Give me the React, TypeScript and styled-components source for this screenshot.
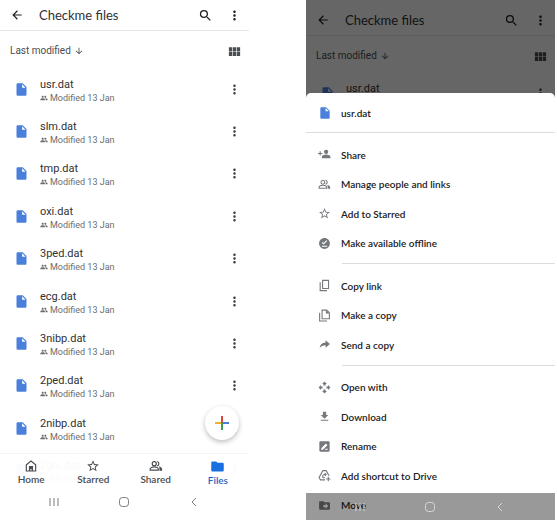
import React from "react";
import styled, { createGlobalStyle } from "styled-components";
import {
  MdArrowBack,
  MdArrowDownward,
  MdDriveFileMove,
  MdFileDownload,
  MdFolder,
  MdInsertDriveFile,
  MdMoreVert,
  MdOfflinePin,
  MdPeople,
  MdSearch,
  MdStarBorder,
  MdViewModule,
} from "react-icons/md";

const GlobalStyle = createGlobalStyle`
  *, *::before, *::after { box-sizing: border-box; }
  body { margin: 0; background: #fff; color: #3c4043; font-family: Roboto, "Liberation Sans", sans-serif; }
  button { border: 0; padding: 0; margin: 0; background: none; color: inherit; font: inherit; cursor: pointer; }
  ul { list-style: none; margin: 0; padding: 0; }
  h1, h2, p { margin: 0; font-weight: 400; }
  svg { display: block; flex: none; }
`;

const brandFont = `Lato, "Liberation Sans", sans-serif`;

const Page = styled.main`
  display: grid;
  grid-template-columns: minmax(0, 1fr) minmax(0, 1fr);
  column-gap: 57px;
  min-height: 100vh;
  padding-right: 2px;
`;

const Phone = styled.section`
  position: relative;
  display: flex;
  flex-direction: column;
  min-width: 0;
`;

const Screen = styled.div`
  position: relative;
  display: flex;
  flex: 1;
  flex-direction: column;
`;

const AppBar = styled.header`
  display: flex;
  align-items: center;
  height: 31px;
  padding: 0 7px 0 10px;
  border-bottom: 1px solid #e6e6e6;
  color: #202124;
`;

const Title = styled.h1`
  flex: 1;
  margin-left: 15px;
  font-family: ${brandFont};
  font-size: 13px;
  line-height: 16px;
  color: #303134;
`;

const IconButton = styled.button<{ $gap?: number }>`
  display: flex;
  align-items: center;
  justify-content: center;
  margin-left: ${(p) => p.$gap ?? 0}px;
`;

const SortBar = styled.div`
  display: flex;
  align-items: center;
  justify-content: space-between;
  height: 40px;
  padding: 0 7px 0 10px;
  color: #4a4d51;
`;

const SortButton = styled.button`
  display: flex;
  align-items: center;
  gap: 3px;
  font-size: 10px;
  line-height: 12px;
`;

const FileList = styled.ul`
  display: grid;
  flex: 1;
  grid-auto-rows: minmax(40px, 1fr);
  margin-top: -3px;
`;

const FileRow = styled.li`
  display: flex;
  align-items: center;
  padding: 0 7px 0 14px;
`;

const FileText = styled.div`
  flex: 1;
  margin-left: 11px;
  padding-top: 3px;
`;

const FileName = styled.p`
  font-size: 11px;
  line-height: 14px;
  color: #303134;
`;

const FileMeta = styled.p`
  display: flex;
  align-items: center;
  gap: 2px;
  font-size: 9px;
  line-height: 12px;
  color: #6a6d71;
`;

const BottomNav = styled.nav`
  position: absolute;
  inset: auto 0 0 0;
  display: grid;
  grid-template-columns: repeat(4, 1fr);
  height: 39px;
  border-top: 1px solid #f4f4f4;
  background: rgba(255, 255, 255, 0.97);
`;

const NavButton = styled.button<{ $active?: boolean }>`
  display: flex;
  flex-direction: column;
  align-items: center;
  padding-top: 5px;
  font-family: ${brandFont};
  font-size: 10px;
  line-height: 12px;
  font-weight: 600;
  color: ${(p) => (p.$active ? "#1a67c9" : "#4a4d51")};
`;

const Fab = styled.button`
  position: absolute;
  right: 10px;
  bottom: 52px;
  display: flex;
  align-items: center;
  justify-content: center;
  width: 34px;
  height: 34px;
  border-radius: 50%;
  background: #fff;
  box-shadow: 0 2px 5px rgba(0, 0, 0, 0.26);
`;

const SystemBar = styled.div<{ $overlay?: boolean }>`
  display: grid;
  grid-template-columns: repeat(3, 70px);
  justify-content: center;
  align-items: center;
  justify-items: center;
  height: ${(p) => (p.$overlay ? 27 : 20)}px;
  margin-bottom: ${(p) => (p.$overlay ? 0 : 8)}px;
  padding-right: 2px;
  color: ${(p) => (p.$overlay ? "#d6d6d6" : "#7a7a7a")};
  ${(p) =>
    p.$overlay &&
    `
    position: absolute;
    inset: auto 0 0 0;
    background: rgba(0, 0, 0, 0.4);
  `}
`;

const Backdrop = styled.div`
  position: relative;
  height: 98px;
  padding-top: 5px;
  overflow: hidden;
`;

const Scrim = styled.div`
  position: absolute;
  inset: 0;
  background: rgba(0, 0, 0, 0.6);
`;

const Sheet = styled.div`
  position: relative;
  display: flex;
  flex: 1;
  flex-direction: column;
  margin-top: -5px;
  border-radius: 5px 5px 0 0;
  background: #fff;
  color: #202124;
  font-family: ${brandFont};
`;

const SheetTitle = styled.h2`
  display: flex;
  align-items: center;
  gap: 9px;
  height: 40px;
  padding-left: 12px;
  border-bottom: 1px solid #dcdcdc;
  font-size: 10px;
  line-height: 14px;
  font-weight: 600;
`;

const MenuGroup = styled.ul<{ $count: number; $last: boolean }>`
  display: flex;
  flex-direction: column;
  flex: ${(p) => p.$count} 0 auto;
  padding: 7px 0 ${(p) => (p.$last ? 0 : 5)}px;
`;

const MenuItem = styled.li`
  display: flex;
  flex: 1 0 29px;
`;

const MenuButton = styled.button`
  display: flex;
  flex: 1;
  align-items: center;
  gap: 10px;
  padding-left: 12px;
  font-size: 10px;
  line-height: 14px;
  font-weight: 600;
  text-align: left;

  svg { color: #75787c; }
`;

const Divider = styled.hr`
  align-self: stretch;
  height: 1px;
  margin: 0 0 0 36px;
  border: 0;
  background: #dcdcdc;
`;

const line = { fill: "none", stroke: "currentColor", strokeWidth: 2 } as const;

const HomeIcon = () => (
  <svg width="14" height="14" viewBox="0 0 24 24">
    <path d="M4 20.500V10l8-6.500 8 6.500v10.500z" {...line} />
    <path d="M8.500 20.500V12h7v8.500h-2.500V17h-2v3.500z" fill="currentColor" />
  </svg>
);

const PeopleIcon = ({ size = 14 }: { size?: number }) => (
  <svg width={size} height={size} viewBox="0 0 24 24">
    <circle cx="9" cy="8" r="3.500" {...line} />
    <path d="M2 19v-1.500c0-2.500 4-4 7-4s7 1.500 7 4V19z" {...line} />
    <path d="M14 4.300a3.800 3.800 0 0 1 0 7.400" {...line} />
    <path d="M17 13c3 .5 5.500 2 5.500 4.500V20H18v-2.500c0-2-.5-3.300-1-4.500z" fill="currentColor" />
  </svg>
);

const ShareIcon = () => (
  <svg width="13" height="13" viewBox="0 0 24 24" fill="currentColor">
    <circle cx="15" cy="7" r="4" />
    <path d="M7 19v-2.500c0-3 5-4.500 8-4.500s8 1.500 8 4.500V19zM3 6h2v3h3v2H5v3H3v-3H0V9h3z" />
  </svg>
);

const CopyLinkIcon = () => (
  <svg width="13" height="13" viewBox="0 0 24 24">
    <path d="M8.500 2.500h11v15h-11zM4 6v15.500h12.500" {...line} />
  </svg>
);

const MakeCopyIcon = () => (
  <svg width="13" height="13" viewBox="0 0 24 24">
    <path d="M7.500 2h8.500l5 5v11H7.500zM3 7v15h13.500" {...line} />
    <path d="M14.500 2v6.500H21z" fill="currentColor" />
  </svg>
);

const SendIcon = () => (
  <svg width="13" height="13" viewBox="0 0 24 24" fill="currentColor">
    <path d="M14 4l8 7-8 7v-4.500C9 13.500 5.500 15 3 19c.6-6 4-10 11-10.500z" />
  </svg>
);

const OpenWithIcon = () => (
  <svg width="13" height="13" viewBox="0 0 24 24" fill="currentColor">
    <path d="M12 1l4.500 4.500H14v3h-4v-3H7.500zM12 23l-4.500-4.500H10v-3h4v3h2.500zM1 12l4.500-4.500V10h3v4h-3v2.500zM23 12l-4.500 4.500V14h-3v-4h3V7.500z" />
  </svg>
);

const RenameIcon = () => (
  <svg width="13" height="13" viewBox="0 0 24 24">
    <rect x="2.500" y="2.500" width="19" height="19" rx="2" fill="currentColor" />
    <path d="M6 18v-3l8.500-8.500 3 3L9 18zM12 18l2-2h4v2z" fill="#fff" />
  </svg>
);

const ShortcutIcon = () => (
  <svg width="13" height="13" viewBox="0 0 24 24">
    <path d="M13 20H4.500L2 15.500 9 3h6l5.500 9.500" {...line} />
    <path d="M13 16H9.500c-2-2-.5-6 2-6H15M12.500 7.500L15 10l-2.500 2.500M19 14.500v8M15 18.500h8" {...line} />
  </svg>
);

const PlusIcon = () => (
  <svg width="16" height="16" viewBox="0 0 16 16">
    <path d="M7 1h2v6H7z" fill="#d9483b" />
    <path d="M1 7h6v2H1z" fill="#eeb22f" />
    <path d="M9 7h6v2H9z" fill="#4a7fdc" />
    <path d="M7 7h2v8H7z" fill="#3c9a55" />
    <path d="M7 7h2L7 9z" fill="#d9483b" />
  </svg>
);

const FileIcon = ({ size = 15 }: { size?: number }) => <MdInsertDriveFile size={size} color="#4a80dc" />;

const files = ["usr.dat", "slm.dat", "tmp.dat", "oxi.dat", "3ped.dat", "ecg.dat", "3nibp.dat", "2ped.dat", "2nibp.dat", "2glu.dat"];

const navItems = [
  { label: "Home", icon: <HomeIcon /> },
  { label: "Starred", icon: <MdStarBorder size={14} /> },
  { label: "Shared", icon: <PeopleIcon /> },
  { label: "Files", icon: <MdFolder size={15} color="#1a6fe0" />, active: true },
];

const menuGroups = [
  [
    { label: "Share", icon: <ShareIcon /> },
    { label: "Manage people and links", icon: <PeopleIcon size={13} /> },
    { label: "Add to Starred", icon: <MdStarBorder size={13} /> },
    { label: "Make available offline", icon: <MdOfflinePin size={13} /> },
  ],
  [
    { label: "Copy link", icon: <CopyLinkIcon /> },
    { label: "Make a copy", icon: <MakeCopyIcon /> },
    { label: "Send a copy", icon: <SendIcon /> },
  ],
  [
    { label: "Open with", icon: <OpenWithIcon /> },
    { label: "Download", icon: <MdFileDownload size={13} /> },
    { label: "Rename", icon: <RenameIcon /> },
    { label: "Add shortcut to Drive", icon: <ShortcutIcon /> },
    { label: "Move", icon: <MdDriveFileMove size={13} /> },
  ],
];

const FolderHeader = () => (
  <>
    <AppBar>
      <IconButton aria-label="Back"><MdArrowBack size={14} /></IconButton>
      <Title>Checkme files</Title>
      <IconButton aria-label="Search"><MdSearch size={15} /></IconButton>
      <IconButton aria-label="More options" $gap={14}><MdMoreVert size={15} /></IconButton>
    </AppBar>
    <SortBar>
      <SortButton>Last modified <MdArrowDownward size={10} /></SortButton>
      <IconButton aria-label="Grid view"><MdViewModule size={15} /></IconButton>
    </SortBar>
  </>
);

const Files = ({ names }: { names: string[] }) => (
  <FileList>
    {names.map((name) => (
      <FileRow key={name}>
        <FileIcon />
        <FileText>
          <FileName>{name}</FileName>
          <FileMeta><MdPeople size={8} /> Modified 13 Jan</FileMeta>
        </FileText>
        <IconButton aria-label={`Options for ${name}`}><MdMoreVert size={15} /></IconButton>
      </FileRow>
    ))}
  </FileList>
);

const SystemButtons = ({ overlay }: { overlay?: boolean }) => (
  <SystemBar $overlay={overlay}>
    <IconButton aria-label="Recent apps">
      <svg width="10" height="10" viewBox="0 0 10 10"><path d="M1 1v8M5 1v8M9 1v8" fill="none" stroke="currentColor" /></svg>
    </IconButton>
    <IconButton aria-label="Home screen">
      <svg width="10" height="10" viewBox="0 0 10 10"><rect x="0.500" y="0.500" width="9" height="9" rx="3" fill="none" stroke="currentColor" /></svg>
    </IconButton>
    <IconButton aria-label="Go back">
      <svg width="10" height="10" viewBox="0 0 10 10"><path d="M7 1L3 5l4 4" fill="none" stroke="currentColor" /></svg>
    </IconButton>
  </SystemBar>
);

export default function App() {
  return (
    <>
      <GlobalStyle />
      <Page>
        <Phone>
          <Screen>
            <FolderHeader />
            <Files names={files} />
            <BottomNav>
              {navItems.map((item) => (
                <NavButton key={item.label} $active={item.active}>
                  {item.icon}
                  {item.label}
                </NavButton>
              ))}
            </BottomNav>
            <Fab aria-label="Create"><PlusIcon /></Fab>
          </Screen>
          <SystemButtons />
        </Phone>
        <Phone>
          <Backdrop>
            <FolderHeader />
            <Files names={files.slice(0, 1)} />
            <Scrim />
          </Backdrop>
          <Sheet>
            <SheetTitle><FileIcon size={14} /> usr.dat</SheetTitle>
            {menuGroups.map((group, index) => (
              <React.Fragment key={group[0].label}>
                {index > 0 && <Divider />}
                <MenuGroup $count={group.length} $last={index === menuGroups.length - 1}>
                  {group.map((item) => (
                    <MenuItem key={item.label}>
                      <MenuButton>{item.icon}{item.label}</MenuButton>
                    </MenuItem>
                  ))}
                </MenuGroup>
              </React.Fragment>
            ))}
          </Sheet>
          <SystemButtons overlay />
        </Phone>
      </Page>
    </>
  );
}
